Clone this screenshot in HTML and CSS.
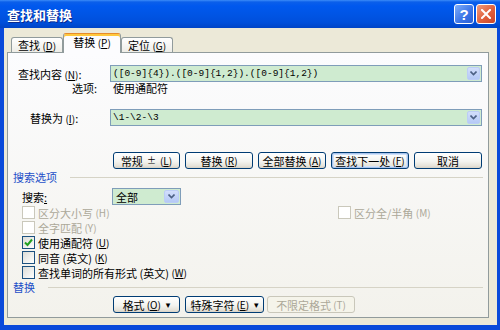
FILE: index.html
```html
<!DOCTYPE html>
<html lang="zh-CN">
<head>
    <meta charset="UTF-8">
    <title>查找和替换</title>
    <link rel="stylesheet" href="styles.css">
</head>
<body>

<div class="window">
    <div class="titlebar">
        <span class="title">查找和替换</span>
        <div class="caption-btns">
            <span class="cap-btn help">?</span>
            <span class="cap-btn close">
                <svg width="10" height="10" viewBox="0 0 10 10"><path d="M1 1 L9 9 M9 1 L1 9" stroke="#fff" stroke-width="2" stroke-linecap="square"/></svg>
            </span>
        </div>
    </div>

    <div class="frame">
        <div class="tabs">
            <div class="tab">查找 <span class="key">(<u>D</u>)</span></div>
            <div class="tab active">替换 <span class="key">(<u>P</u>)</span></div>
            <div class="tab">定位 <span class="key">(<u>G</u>)</span></div>
        </div>

        <div class="panel">
            <!-- 查找内容 -->
            <div class="field field-find">
                <span class="lbl">查找内容 <span class="key">(<u>N</u>)</span>:</span>
                <div class="combo">
                    <span class="val">([0-9]{4}).([0-9]{1,2}).([0-9]{1,2})</span>
                    <span class="drop"><svg width="7" height="5" viewBox="0 0 7 5"><path d="M0.5 0.5 L3.5 3.5 L6.5 0.5" fill="none" stroke="#4D6185" stroke-width="1.6"/></svg></span>
                </div>
            </div>
            <div class="field-opts">
                <span class="opts-lbl">选项:</span>
                <span class="opts-val">使用通配符</span>
            </div>

            <!-- 替换为 -->
            <div class="field field-repl">
                <span class="lbl">替换为 <span class="key">(<u>I</u>)</span>:</span>
                <div class="combo">
                    <span class="val">\1-\2-\3</span>
                    <span class="drop"><svg width="7" height="5" viewBox="0 0 7 5"><path d="M0.5 0.5 L3.5 3.5 L6.5 0.5" fill="none" stroke="#4D6185" stroke-width="1.6"/></svg></span>
                </div>
            </div>

            <div class="btn-row">
                <span class="btn w67">常规 <span class="pm">±</span> <span class="key">(<u>L</u>)</span></span>
                <span class="btn w68">替换 <span class="key">(<u>R</u>)</span></span>
                <span class="btn w68">全部替换 <span class="key">(<u>A</u>)</span></span>
                <span class="btn w78 focus">查找下一处 <span class="key">(<u>F</u>)</span></span>
                <span class="btn w68">取消</span>
            </div>

            <!-- 搜索选项 -->
            <div class="group g-search">搜索选项</div>
            <div class="field field-search">
                <span class="lbl">搜索<u>:</u></span>
                <div class="combo select">
                    <span class="val">全部</span>
                    <span class="drop big"><svg width="7" height="5" viewBox="0 0 7 5"><path d="M0.5 0.5 L3.5 3.5 L6.5 0.5" fill="none" stroke="#4D6185" stroke-width="1.6"/></svg></span>
                </div>
            </div>

            <div class="checks">
                <div class="check-row">
                    <span class="opt off"><span class="chk"></span>区分大小写 <span class="key">(H)</span></span>
                    <span class="opt off"><span class="chk"></span>区分全/半角 <span class="key">(M)</span></span>
                </div>
                <div class="check-row">
                    <span class="opt off"><span class="chk"></span>全字匹配 <span class="key">(Y)</span></span>
                </div>
                <div class="check-row">
                    <span class="opt"><span class="chk on"><svg width="9" height="9" viewBox="0 0 9 9"><path d="M1 4.5 L3.5 7 L8 1.5" fill="none" stroke="#21A121" stroke-width="2"/></svg></span>使用通配符 <span class="key">(<u>U</u>)</span></span>
                </div>
                <div class="check-row">
                    <span class="opt"><span class="chk"></span>同音 (英文) <span class="key">(<u>K</u>)</span></span>
                </div>
                <div class="check-row">
                    <span class="opt"><span class="chk"></span>查找单词的所有形式 (英文) <span class="key">(<u>W</u>)</span></span>
                </div>
            </div>

            <!-- 替换 -->
            <div class="group g-repl">替换</div>
            <div class="btn-row bottom">
                <span class="btn w67">格式 <span class="key">(<u>O</u>)</span> <span class="caret">▾</span></span>
                <span class="btn w79">特殊字符 <span class="key">(<u>E</u>)</span> <span class="caret">▾</span></span>
                <span class="btn w88 disabled">不限定格式 <span class="key">(T)</span></span>
            </div>
        </div>
    </div>
</div>

</body>
</html>
```

FILE: styles.css
```css
*{
    margin: 0;
    padding: 0;
    box-sizing: border-box;
}
body{
    background: #fff;
    font-family: "Noto Sans CJK SC", "DejaVu Sans", sans-serif;
    font-size: 11px;
    color: #000;
}
u{
    text-decoration: underline;
}
.key{
    font-size: 10px;
}

/* window frame */
.window{
    width: 500px;
    height: 330px;
    display: flex;
    flex-direction: column;
}
.titlebar{
    height: 28px;
    display: flex;
    align-items: center;
    justify-content: space-between;
    padding: 0 4px 0 7px;
    background: linear-gradient(#3C8CF8 0, #0B5FEA 2px, #0058EE 6px, #0055E5 50%, #004FDB 80%, #0044C6 100%);
}
.title{
    color: #fff;
    font-weight: bold;
    font-size: 13px;
    text-shadow: 1px 1px 0 #0A2A90;
}
.caption-btns{
    display: flex;
    gap: 2px;
}
.cap-btn{
    width: 20px;
    height: 20px;
    border: 1px solid #fff;
    border-radius: 3px;
    display: flex;
    align-items: center;
    justify-content: center;
    color: #fff;
    font-family: "Liberation Sans", sans-serif;
    font-weight: bold;
    font-size: 15px;
}
.cap-btn.help{
    background: linear-gradient(135deg, #7FAEFA, #3A73E6 60%, #2A5FD6);
}
.cap-btn.close{
    background: linear-gradient(135deg, #F09C7E, #E0603C 55%, #C9452A);
}
.frame{
    flex: 1;
    display: flex;
    flex-direction: column;
    background: #ECE9D8;
    border-left: 4px solid #0A4ADA;
    border-right: 3px solid #0A4ADA;
    border-bottom: 5px solid #0A4ADA;
    padding: 5px 8px 7px 3px;
}

/* tabs */
.tabs{
    display: flex;
    align-items: flex-end;
    height: 19px;
    padding-left: 4px;
    position: relative;
    z-index: 1;
}
.tab{
    width: 52px;
    height: 15px;
    border: 1px solid #919B9C;
    border-bottom: none;
    border-radius: 3px 3px 0 0;
    background: linear-gradient(#FFFFFF, #EEEDE7);
    display: flex;
    align-items: center;
    justify-content: center;
    line-height: 13px;
    white-space: pre;
}
.tab.active{
    width: 58px;
    height: 20px;
    margin-bottom: -1px;
    background: #FCFCFE;
    border-top-color: #E68B2C;
    box-shadow: inset 0 2px 0 #FFC83C;
    padding-bottom: 2px;
}

/* tab page */
.panel{
    height: 266px;
    border: 1px solid #919B9C;
    background: linear-gradient(#FCFCFE, #F3F2EC);
}
.field{
    display: flex;
    align-items: center;
    height: 17px;
}
.field .lbl{
    white-space: nowrap;
}
.field-find{
    margin-top: 12px;
    padding-left: 10px;
}
.field-find .lbl{
    width: 92px;
}
.field-opts{
    display: flex;
    height: 12px;
    line-height: 12px;
    padding-left: 10px;
}
.opts-lbl{
    width: 79px;
    text-align: right;
}
.opts-val{
    margin-left: 16px;
}
.field-repl{
    margin-top: 15px;
    padding-left: 22px;
}
.field-repl .lbl{
    width: 80px;
}
.combo{
    width: 372px;
    height: 17px;
    display: flex;
    align-items: center;
    border: 1px solid #7F9DB9;
    background: #CFEBD0;
    padding-left: 2px;
}
.combo .val{
    flex: 1;
    font-family: "Liberation Mono", monospace;
    font-size: 9.5px;
    white-space: nowrap;
}
.drop{
    width: 13px;
    height: 13px;
    margin-right: 1px;
    border: 1px solid #BCCDF6;
    border-radius: 2px;
    background: linear-gradient(#D2DEFB, #B5C9F6);
    display: flex;
    align-items: center;
    justify-content: center;
}
.drop.big{
    width: 15px;
}

/* buttons */
.btn-row{
    display: flex;
    gap: 5px;
    margin-top: 26px;
    padding-left: 105px;
}
.btn{
    height: 17px;
    display: flex;
    align-items: center;
    justify-content: center;
    gap: 2px;
    border: 1px solid #003C74;
    border-radius: 3px;
    background: linear-gradient(#FFFFFF, #F4F4F0 55%, #E6E3DA 85%, #D8D2C6);
    white-space: nowrap;
}
.btn.focus{
    box-shadow: inset 0 0 0 1px #A9C4EC, inset 0 0 0 2px #D0E2FA;
}
.btn.disabled{
    border-color: #C9C7BA;
    background: #F5F4EA;
    color: #ACA899;
}
.pm{
    font-size: 9px;
    margin: 0 2px;
}
.w67{ width: 67px; }
.w68{ width: 68px; }
.w78{ width: 78px; }
.w79{ width: 79px; }
.w88{ width: 88px; }
.caret{
    font-size: 9px;
    margin-left: 3px;
}
.btn-row.bottom{
    margin-top: 2px;
}
.btn-row.bottom .w88{
    margin-left: -2px;
}

/* groups */
.group{
    display: flex;
    align-items: center;
    height: 15px;
    padding-left: 5px;
    color: #1E4FC8;
}
.group::after{
    content: "";
    flex: 1;
    border-top: 1px solid #D6D3C6;
    margin: 1px 5px 0 13px;
}
.group.g-repl{
    height: 14px;
}
.field-search{
    margin-top: 4px;
    padding-left: 14px;
}
.field-search .lbl{
    width: 90px;
}
.combo.select{
    width: 69px;
    padding-left: 3px;
}
.combo.select .val{
    font-family: "Noto Sans CJK SC", sans-serif;
    font-size: 11px;
}

/* check boxes */
.checks{
    padding-left: 14px;
}
.check-row{
    display: flex;
    align-items: center;
    height: 15px;
}
.opt{
    display: flex;
    align-items: center;
    white-space: pre;
}
.check-row .opt:first-child{
    width: 316px;
}
.chk{
    width: 13px;
    height: 13px;
    margin-right: 3px;
    border: 1px solid #1C5180;
    background: linear-gradient(135deg, #DCDCD7, #FFFFFF);
    display: flex;
    align-items: center;
    justify-content: center;
}
.opt.off{
    color: #ACA899;
}
.opt.off .chk{
    border-color: #CAC8BB;
    background: #FFFFFF;
}
```
